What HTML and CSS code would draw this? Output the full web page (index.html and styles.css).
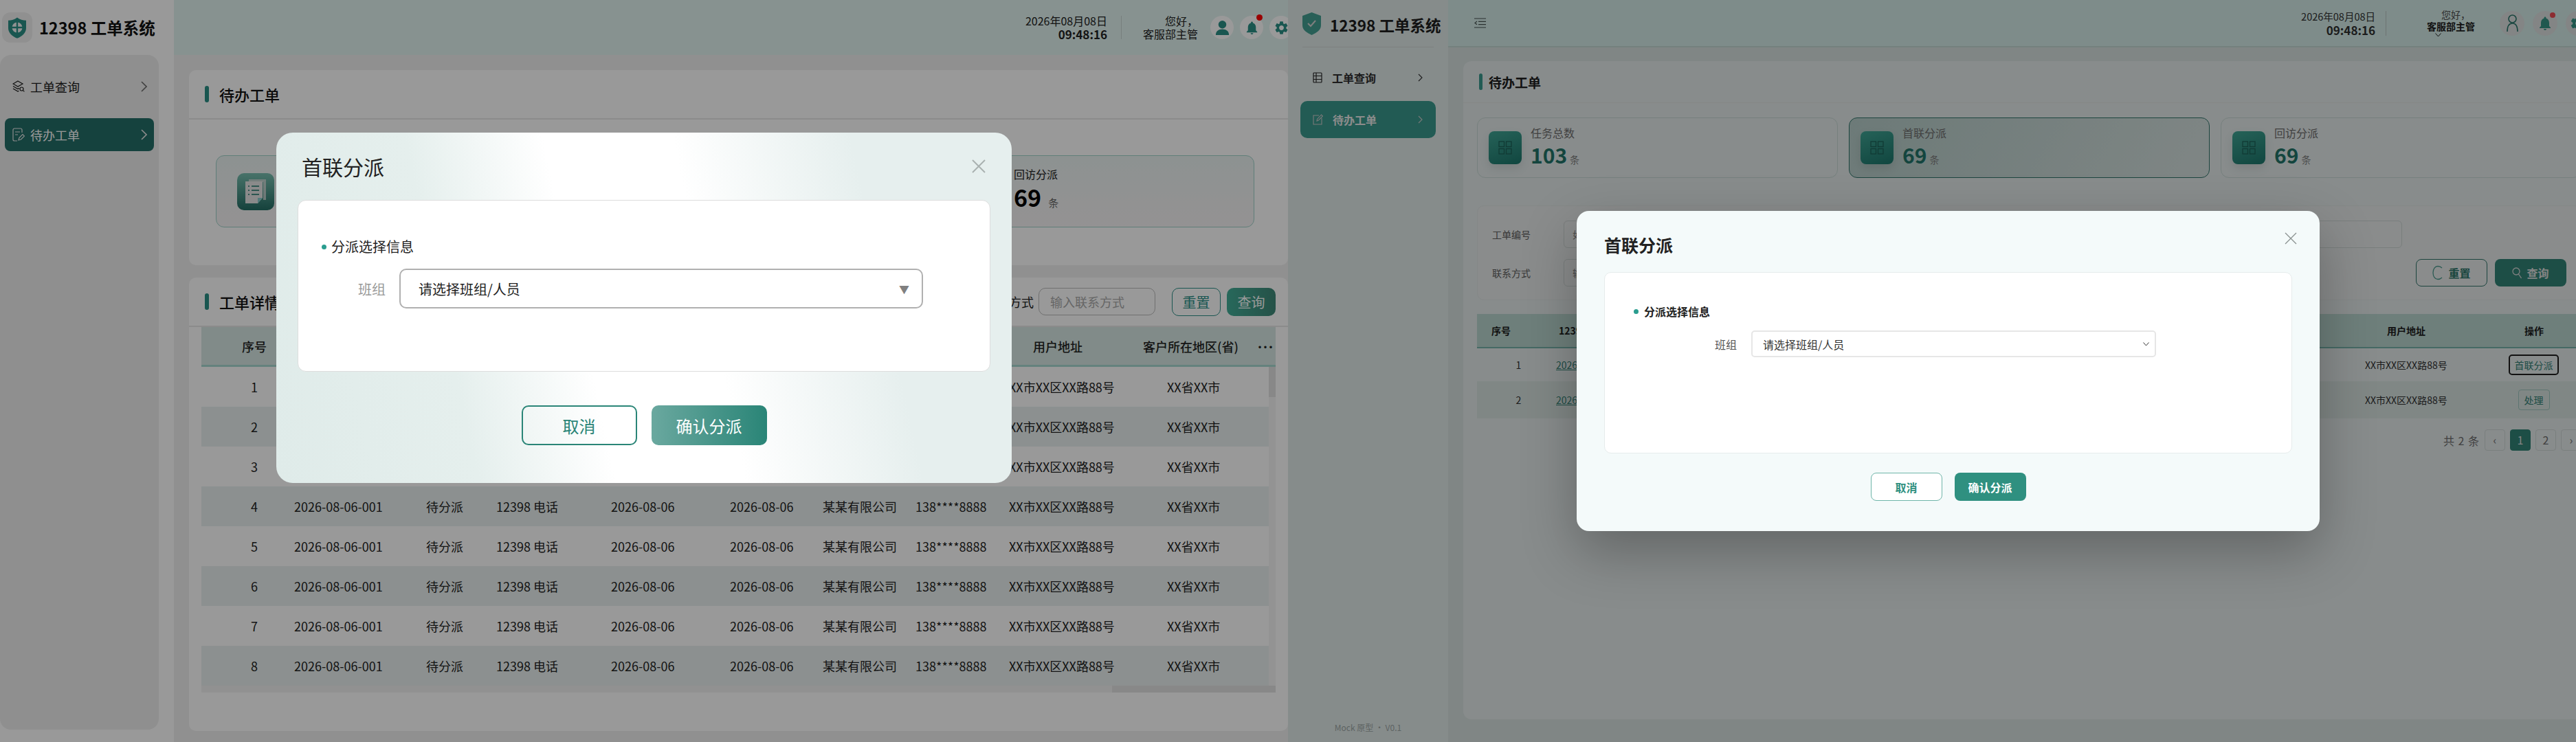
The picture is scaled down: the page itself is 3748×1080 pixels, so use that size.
FILE: index.html
```html
<!DOCTYPE html>
<html lang="zh-CN">
<head>
  <meta charset="UTF-8">
  <meta name="viewport" content="width=device-width, initial-scale=1.0">
  <title>12398 工单系统</title>
  <link rel="stylesheet" href="styles.css">
</head>
<body>
  <!-- First version of the prototype -->
  <section class="app app-one">
    <aside class="side">
      <div class="brand">
        <span class="brand-box">
          <svg width="26" height="31" viewBox="0 0 26 31"><path d="M13 0.5 C17 3.5 21 4.5 26 4.8 V16 C26 23 20 28 13 30.8 C6 28 0 23 0 16 V4.8 C5 4.5 9 3.5 13 0.5Z" fill="#2a8f86"/><circle cx="13" cy="15" r="7.5" fill="#f4f4f4"/><path d="M13 7v16M5 15h16" stroke="#2a8f86" stroke-width="2.4"/></svg>
        </span>
        <span class="brand-name">12398 工单系统</span>
      </div>
      <nav class="nav-panel">
        <a class="nav-item">
          <svg class="nav-icon" width="18" height="18" viewBox="0 0 18 18" fill="none" stroke="#1c1c1c" stroke-width="1.2"><path d="M8 1l7 4-7 4-7-4z"/><path d="M1 8.5l7 4 2-1.1M1 12l7 4 1.5-.8"/><circle cx="13.5" cy="12.5" r="2.5"/><path d="M15.4 14.4l2 2"/></svg>
          <span>工单查询</span>
          <svg class="nav-arrow" width="9" height="16" viewBox="0 0 9 16" fill="none" stroke="#6d6d6d" stroke-width="1.6"><path d="M1 1l7 7-7 7"/></svg>
        </a>
        <a class="nav-item active">
          <svg class="nav-icon" width="18" height="20" viewBox="0 0 18 20" fill="none" stroke="#e8e8e8" stroke-width="1.2"><path d="M14 7V3a2 2 0 0 0-2-2H3a2 2 0 0 0-2 2v14a2 2 0 0 0 2 2h4"/><path d="M4 6h7M4 10h4"/><path d="M9 18l1-3.5 5-5 2.5 2.5-5 5z"/></svg>
          <span>待办工单</span>
          <svg class="nav-arrow" width="9" height="16" viewBox="0 0 9 16" fill="none" stroke="#e8e8e8" stroke-width="1.6"><path d="M1 1l7 7-7 7"/></svg>
        </a>
      </nav>
    </aside>
    <main class="main">
      <header class="topbar">
        <div class="clock">
          <span>2026年08月08日</span>
          <b>09:48:16</b>
        </div>
        <i class="divider"></i>
        <div class="user"><span>您好，</span><span>客服部主管</span></div>
        <div class="tools">
          <span class="tool"><svg width="22" height="24" viewBox="0 0 22 24" fill="#2a8f86"><circle cx="11" cy="7" r="6"/><path d="M1 23c0-6 4-9 10-9s10 3 10 9z"/></svg></span>
          <span class="tool"><svg width="30" height="30" viewBox="0 0 24 24" fill="#2a8f86"><path d="M12 22c1.1 0 2-.9 2-2h-4c0 1.1.9 2 2 2zm6-6v-5c0-3.07-1.63-5.64-4.5-6.32V4c0-.83-.67-1.5-1.5-1.5s-1.5.67-1.5 1.5v.68C7.64 5.36 6 7.92 6 11v5l-2 2v1h16v-1l-2-2z"/></svg><i class="dot"></i></span>
          <span class="tool"><svg width="26" height="26" viewBox="0 0 24 24" fill="#2a8f86"><path d="M19.14 12.94c.04-.3.06-.61.06-.94 0-.32-.02-.64-.07-.94l2.03-1.58c.18-.14.23-.41.12-.61l-1.92-3.32c-.12-.22-.37-.29-.59-.22l-2.39.96c-.5-.38-1.03-.7-1.62-.94l-.36-2.54c-.04-.24-.24-.41-.48-.41h-3.84c-.24 0-.43.17-.47.41l-.36 2.54c-.59.24-1.13.57-1.62.94l-2.39-.96c-.22-.08-.47 0-.59.22L2.74 8.87c-.12.21-.08.47.12.61l2.03 1.58c-.05.3-.09.63-.09.94s.02.64.07.94l-2.03 1.58c-.18.14-.23.41-.12.61l1.92 3.32c.12.22.37.29.59.22l2.39-.96c.5.38 1.03.7 1.62.94l.36 2.54c.05.24.24.41.48.41h3.84c.24 0 .44-.17.47-.41l.36-2.54c.59-.24 1.13-.56 1.62-.94l2.39.96c.22.08.47 0 .59-.22l1.92-3.32c.12-.22.07-.47-.12-.61l-2.01-1.58zM12 15.6c-1.98 0-3.6-1.62-3.6-3.6s1.62-3.6 3.6-3.6 3.6 1.62 3.6 3.6-1.62 3.6-3.6 3.6z"/></svg></span>
        </div>
      </header>
      <div class="content">
        <section class="card card-todo">
          <div class="card-head"><i class="bar"></i><h2>待办工单</h2></div>
          <div class="stats">
            <div class="stat">
              <span class="stat-icon">
                <svg width="30" height="36" viewBox="0 0 30 36"><path d="M5 0h25v30h-4V4H5z" fill="#ddd" opacity=".75"/><path d="M0 3h25v24l-7 8H0z" fill="#e6e6e6"/><path d="M18 35l7-8h-7z" fill="#8cc"/><path d="M4 10h2M4 16h2M4 22h2M9 10h11M9 16h11M9 22h11" stroke="#4a8f86" stroke-width="2"/></svg>
              </span>
              <div><div class="stat-label">任务总数</div><div class="stat-value">103<small>条</small></div></div>
            </div>
            <div class="stat">
              <span class="stat-icon"></span>
              <div><div class="stat-label">首联分派</div><div class="stat-value">69<small>条</small></div></div>
            </div>
            <div class="stat stat-last">
              <div><div class="stat-label">回访分派</div><div class="stat-value">69<small>条</small></div></div>
            </div>
          </div>
        </section>
        <section class="card card-list">
          <div class="card-head">
            <i class="bar"></i><h2>工单详情</h2>
            <div class="filters">
              <label>联系方式</label>
              <span class="input">输入联系方式</span>
              <button class="btn-reset">重置</button>
              <button class="btn-query">查询</button>
            </div>
          </div>
          <div class="grid-table">
            <div class="grid-head">
              <span class="no">序号</span><span>工单编号</span><span>状态</span><span>来源</span><span>创建日期</span><span>受理日期</span><span>客户名称</span><span>联系方式</span><span>用户地址</span><span>客户所在地区(省)</span><span class="more">⋯</span>
            </div>
            <div class="grid-wrap">
              <div class="grid-rows" id="rowsOne"></div>
              <div class="vbar"><i></i></div>
            </div>
            <div class="hbar"><i></i></div>
          </div>
        </section>
      </div>
    </main>
    <div class="overlay">
      <div class="dialog">
        <div class="dialog-head">
          <h3>首联分派</h3>
          <svg width="20" height="20" viewBox="0 0 20 20" stroke="#a9b1b0" stroke-width="2"><path d="M1 1l18 18M19 1L1 19"/></svg>
        </div>
        <div class="dialog-body">
          <div class="section-title"><i></i>分派选择信息</div>
          <div class="form-row">
            <label>班组</label>
            <div class="select">请选择班组/人员<span>▼</span></div>
          </div>
        </div>
        <div class="dialog-foot">
          <button class="btn-cancel">取消</button>
          <button class="btn-ok">确认分派</button>
        </div>
      </div>
    </div>
  </section>

  <!-- Second version -->
  <section class="app app-two">
    <aside class="side">
      <div class="brand">
        <svg class="brand-logo" width="27" height="33" viewBox="0 0 27 33"><path d="M13.5 0 L27 5 V19 C27 26 20 30 13.5 33 C7 30 0 26 0 19 V5Z" fill="#4aae9f"/><path d="M8 16l4 4 7-8" fill="none" stroke="#e8e8e8" stroke-width="2"/></svg>
        <span class="brand-name">12398 工单系统</span>
      </div>
      <nav class="nav-panel">
        <a class="nav-item">
          <svg class="nav-icon" width="14" height="16" viewBox="0 0 14 16" fill="none" stroke="#2a2a2a" stroke-width="1.2"><rect x="1" y="1" width="12" height="14" rx="1"/><path d="M1 5.5h12M1 10.5h12M5 1v14"/></svg>
          <span>工单查询</span>
          <svg class="nav-arrow" width="7" height="12" viewBox="0 0 7 12" fill="none" stroke="#333" stroke-width="1.1"><path d="M1 1l5 5-5 5"/></svg>
        </a>
        <a class="nav-item active">
          <svg class="nav-icon" width="15" height="16" viewBox="0 0 15 16" fill="none" stroke="#ddd" stroke-width="1.1"><path d="M9 2H1v13h12V6"/><path d="M6 10l.5-2.5L12.5 1l2 2-6 6z"/></svg>
          <span>待办工单</span>
          <svg class="nav-arrow" width="7" height="12" viewBox="0 0 7 12" fill="none" stroke="#ddd" stroke-width="1.1"><path d="M1 1l5 5-5 5"/></svg>
        </a>
      </nav>
      <div class="side-foot">Mock 原型 · V0.1</div>
    </aside>
    <main class="main">
      <header class="topbar">
        <svg class="menu-btn" width="17" height="15" viewBox="0 0 17 15" fill="none" stroke="#4d5a58" stroke-width="1.2"><path d="M0 1h17M6 5.3h11M6 9.6h11M0 14h17M4 5l-3 2.4 3 2.4"/></svg>
        <div class="clock">
          <span>2026年08月08日</span>
          <b>09:48:16</b>
        </div>
        <i class="divider"></i>
        <div class="user">
          <span class="hello">您好，</span>
          <b>客服部主管</b>
          <svg width="9" height="6" viewBox="0 0 9 6" fill="none" stroke="#222" stroke-width="1"><path d="M.5.5l4 4.5 4-4.5"/></svg>
        </div>
        <div class="tools">
          <span class="tool"><svg width="17" height="26" viewBox="0 0 17 26" fill="none" stroke="#2d7f73" stroke-width="1.6"><circle cx="8.5" cy="6.5" r="5.5"/><path d="M1 25c0-7 2-12 7.5-12S16 18 16 25"/></svg></span>
          <span class="tool"><svg width="24" height="24" viewBox="0 0 24 24" fill="#3aa090"><path d="M12 22c1.1 0 2-.9 2-2h-4c0 1.1.9 2 2 2zm6-6v-5c0-3.07-1.63-5.64-4.5-6.32V4c0-.83-.67-1.5-1.5-1.5s-1.5.67-1.5 1.5v.68C7.64 5.36 6 7.92 6 11v5l-2 2v1h16v-1l-2-2z"/></svg><i class="dot"></i></span>
          <span class="tool"><svg width="26" height="26" viewBox="0 0 24 24" fill="#3aa090"><path d="M19.14 12.94c.04-.3.06-.61.06-.94 0-.32-.02-.64-.07-.94l2.03-1.58c.18-.14.23-.41.12-.61l-1.92-3.32c-.12-.22-.37-.29-.59-.22l-2.39.96c-.5-.38-1.03-.7-1.62-.94l-.36-2.54c-.04-.24-.24-.41-.48-.41h-3.84c-.24 0-.43.17-.47.41l-.36 2.54c-.59.24-1.13.57-1.62.94l-2.39-.96c-.22-.08-.47 0-.59.22L2.74 8.87c-.12.21-.08.47.12.61l2.03 1.58c-.05.3-.09.63-.09.94s.02.64.07.94l-2.03 1.58c-.18.14-.23.41-.12.61l1.92 3.32c.12.22.37.29.59.22l2.39-.96c.5.38 1.03.7 1.62.94l.36 2.54c.05.24.24.41.48.41h3.84c.24 0 .44-.17.47-.41l.36-2.54c.59-.24 1.13-.56 1.62-.94l2.39.96c.22.08.47 0 .59-.22l1.92-3.32c.12-.22.07-.47-.12-.61l-2.01-1.58zM12 15.6c-1.98 0-3.6-1.62-3.6-3.6s1.62-3.6 3.6-3.6 3.6 1.62 3.6 3.6-1.62 3.6-3.6 3.6z"/></svg></span>
        </div>
      </header>
      <div class="content">
        <section class="card">
          <div class="card-head"><i class="bar"></i><h2>待办工单</h2></div>
          <div class="stats">
            <div class="stat">
              <span class="stat-icon"><svg width="20" height="20" viewBox="0 0 20 20" fill="none" stroke="#1f6b60" stroke-width="1.3"><rect x="1" y="1" width="7.5" height="7.5"/><rect x="11.5" y="1" width="7.5" height="7.5"/><rect x="1" y="11.5" width="7.5" height="7.5"/><rect x="11.5" y="11.5" width="7.5" height="7.5"/></svg></span>
              <div><div class="stat-label">任务总数</div><div class="stat-value">103<small>条</small></div></div>
            </div>
            <div class="stat selected">
              <span class="stat-icon"><svg width="20" height="20" viewBox="0 0 20 20" fill="none" stroke="#1f6b60" stroke-width="1.3"><rect x="1" y="1" width="7.5" height="7.5"/><rect x="11.5" y="1" width="7.5" height="7.5"/><rect x="1" y="11.5" width="7.5" height="7.5"/><rect x="11.5" y="11.5" width="7.5" height="7.5"/></svg></span>
              <div><div class="stat-label">首联分派</div><div class="stat-value">69<small>条</small></div></div>
            </div>
            <div class="stat">
              <span class="stat-icon"><svg width="20" height="20" viewBox="0 0 20 20" fill="none" stroke="#1f6b60" stroke-width="1.3"><rect x="1" y="1" width="7.5" height="7.5"/><rect x="11.5" y="1" width="7.5" height="7.5"/><rect x="1" y="11.5" width="7.5" height="7.5"/><rect x="11.5" y="11.5" width="7.5" height="7.5"/></svg></span>
              <div><div class="stat-label">回访分派</div><div class="stat-value">69<small>条</small></div></div>
            </div>
          </div>
          <div class="filter-panel">
            <div class="filter-row">
              <label>工单编号</label><span class="input">如 2026-08-06-001</span>
              <label class="second">客户名称</label><span class="input">输入客户名称</span>
            </div>
            <div class="filter-row">
              <label>联系方式</label><span class="input short">输入联系方式</span>
              <button class="btn-reset"><svg width="16" height="22" viewBox="0 0 16 22" fill="none" stroke="#4ea597" stroke-width="1.3"><path d="M14 4C12 2 10 1.5 8 1.5 4 1.5 1 5.5 1 11s3 9.5 7 9.5c2 0 4-.5 6-2.5"/></svg>重置</button>
              <button class="btn-query"><svg width="14" height="18" viewBox="0 0 14 18" fill="none" stroke="#e8e8e8" stroke-width="1.3"><circle cx="6" cy="7" r="5"/><path d="M9.5 11l4 6"/></svg>查询</button>
            </div>
          </div>
          <div class="list">
            <div class="list-head"><span>序号</span><span>12398 工单编号</span><span>用户地址</span><span>操作</span></div>
            <div class="list-row"><span class="no">1</span><a>2026-08-06-001</a><span>XX市XX区XX路88号</span><button class="op focus">首联分派</button></div>
            <div class="list-row even"><span class="no">2</span><a>2026-08-06-002</a><span>XX市XX区XX路88号</span><button class="op">处理</button></div>
          </div>
          <div class="pager">
            <span class="total">共 2 条</span>
            <span class="page">‹</span><span class="page on">1</span><span class="page">2</span><span class="page">›</span>
          </div>
        </section>
      </div>
    </main>
    <div class="overlay">
      <div class="dialog">
        <div class="dialog-head">
          <h3>首联分派</h3>
          <svg class="dialog-close" width="18" height="18" viewBox="0 0 18 18" stroke="#8a9190" stroke-width="1.3"><path d="M1 1l16 16M17 1L1 17"/></svg>
        </div>
        <div class="dialog-body">
          <div class="section-title"><i></i>分派选择信息</div>
          <div class="form-row">
            <label>班组</label>
            <div class="select">请选择班组/人员<svg width="9" height="6" viewBox="0 0 9 6" fill="none" stroke="#333" stroke-width="1"><path d="M.5.5l4 4.5 4-4.5"/></svg></div>
          </div>
        </div>
        <div class="dialog-foot">
          <button class="btn-cancel">取消</button>
          <button class="btn-ok">确认分派</button>
        </div>
      </div>
    </div>
  </section>

  <script>
    // Table rows of the first version are all the same mock record
    const rowsOne = document.getElementById('rowsOne');
    for (let i = 1; i <= 8; i++) {
      const row = document.createElement('div');
      row.className = 'grid-row';
      const cells = [i, '2026-08-06-001', '待分派', '12398 电话', '2026-08-06', '2026-08-06', '某某有限公司', '138****8888', 'XX市XX区XX路88号', 'XX省XX市'];
      cells.forEach(function(text, n) {
        const cell = document.createElement('span');
        cell.textContent = text;
        if (n === 0) cell.className = 'no';
        row.appendChild(cell);
      });
      rowsOne.appendChild(row);
    }
  </script>
</body>
</html>
```

FILE: styles.css
```css
* {
  box-sizing: border-box;
}

body {
  margin: 0;
  width: 3748px;
  height: 1080px;
  overflow: hidden;
  display: flex;
  font-family: "Noto Sans CJK SC", "Noto Sans", sans-serif;
  color: #222;
}

h2, h3 {
  margin: 0;
  font-weight: 500;
}

button {
  font-family: inherit;
  cursor: pointer;
}

.app {
  position: relative;
  flex: none;
  height: 1080px;
  display: flex;
  overflow: hidden;
}

.side {
  flex: none;
  display: flex;
  flex-direction: column;
}

.main {
  flex: 1;
  min-width: 0;
  display: flex;
  flex-direction: column;
  overflow: hidden;
}

.brand {
  display: flex;
  align-items: center;
}

.topbar {
  display: flex;
  align-items: center;
  flex: none;
}

.clock {
  display: flex;
  flex-direction: column;
  align-items: flex-end;
}

.divider {
  width: 1px;
  background: #c8d4d2;
}

.user {
  display: flex;
  flex-direction: column;
  align-items: flex-end;
}

.tools {
  display: flex;
}

.tool {
  position: relative;
  display: flex;
  align-items: center;
  justify-content: center;
  flex: none;
  border-radius: 50%;
}

.dot {
  position: absolute;
  border-radius: 50%;
}

.card {
  background: #fff;
}

.card-head {
  display: flex;
  align-items: center;
}

.bar {
  width: 6px;
  height: 24px;
  border-radius: 3px;
}

.stat {
  display: flex;
  align-items: center;
}

.stat-icon {
  display: flex;
  align-items: center;
  justify-content: center;
  flex: none;
}

.overlay {
  position: absolute;
  inset: 0;
  display: flex;
  justify-content: center;
}

.dialog-head {
  display: flex;
  align-items: center;
  justify-content: space-between;
}

.section-title {
  display: flex;
  align-items: center;
}

.section-title i {
  border-radius: 50%;
  background: #2a9d8f;
}

.form-row {
  display: flex;
  align-items: center;
}

.select {
  display: flex;
  align-items: center;
  justify-content: space-between;
  background: #fff;
}

.dialog-foot {
  display: flex;
  justify-content: center;
}

/* ---------- first version ---------- */
.app-one {
  width: 1874px;
  background: #f0f0f0;
}

.app-one .side {
  width: 253px;
  background: #fff;
  padding-top: 18px;
}

.app-one .brand {
  height: 44px;
  margin-left: 3px;
  gap: 10px;
}

.brand-box {
  width: 44px;
  height: 44px;
  border-radius: 12px;
  background: #f0f0f0;
  display: flex;
  align-items: center;
  justify-content: center;
}

.app-one .brand-name {
  font-size: 23.5px;
  font-weight: 700;
  color: #111;
  white-space: nowrap;
}

.app-one .nav-panel {
  margin-top: 18px;
  width: 231px;
  height: 982px;
  background: #eee;
  border-radius: 16px;
  padding: 22px 7px;
  display: flex;
  flex-direction: column;
  gap: 22px;
}

.app-one .nav-item {
  height: 48px;
  display: flex;
  align-items: center;
  padding: 0 10px 0 11px;
  border-radius: 8px;
  font-size: 18px;
  color: #1c1c1c;
}

.app-one .nav-item .nav-icon {
  margin-right: 8px;
}

.nav-arrow {
  margin-left: auto;
}

.app-one .nav-item.active {
  background: #246e68;
  color: #fff;
}

.app-one .topbar {
  height: 80px;
  background: #e1f3f0;
  justify-content: flex-end;
  margin-right: -7px;
}

.app-one .clock {
  font-size: 16px;
  line-height: 19px;
  margin-right: 20px;
}

.app-one .clock b {
  font-size: 17px;
  font-weight: 700;
}

.app-one .divider {
  height: 34px;
  margin-right: 31px;
}

.app-one .user {
  font-size: 16px;
  line-height: 19px;
  margin-right: 18px;
}

.app-one .tools {
  gap: 9px;
}

.app-one .tool {
  width: 34px;
  height: 34px;
  background: #fff;
}

.app-one .tool svg {
  width: 23px;
  height: 23px;
}

.app-one .dot {
  width: 9px;
  height: 9px;
  right: 1px;
  top: -2px;
  background: #ff0000;
}

.app-one .content {
  flex: 1;
  padding: 22px 0 16px 22px;
  display: flex;
  flex-direction: column;
  gap: 18px;
}

.app-one .card {
  border-radius: 10px;
}

.app-one .card-head {
  padding-left: 23px;
  height: 72px;
  border-bottom: 2px solid #e8e8e8;
  gap: 15px;
}

.app-one .bar {
  background: #2a8f86;
}

.app-one h2 {
  font-size: 22px;
  color: #111;
}

.card-todo {
  height: 284px;
}

.app-one .stats {
  margin-top: 52px;
  padding: 0 49px 0 39px;
  display: grid;
  grid-template-columns: 1fr 1fr 451px;
  gap: 24px;
}

.app-one .stat {
  height: 105px;
  padding-left: 30px;
  gap: 16px;
  border: 1.5px solid #9fd3ca;
  border-radius: 12px;
  background: linear-gradient(#ebf4f2, #f7f3f5);
}

.app-one .stat-last {
  padding-left: 100px;
}

.app-one .stat-icon {
  width: 54px;
  height: 54px;
  border-radius: 10px;
  background: linear-gradient(#78bfb0, #246e65);
}

.app-one .stat-label {
  font-size: 16px;
  line-height: 24px;
}

.app-one .stat-value {
  font-size: 34px;
  font-weight: 700;
  line-height: 44px;
  color: #000;
}

.app-one .stat-value small {
  font-size: 15px;
  font-weight: 400;
  color: #666;
  margin-left: 10px;
}

.card-list {
  flex: 1;
}

.filters {
  margin-left: auto;
  margin-right: 18px;
  display: flex;
  align-items: center;
  font-size: 18px;
}

.filters label {
  margin-right: 7px;
}

.filters .input {
  width: 170px;
  height: 40px;
  margin-right: 24px;
  padding-left: 16px;
  line-height: 38px;
  border: 1px solid #bbb;
  border-radius: 10px;
  color: #aaa;
}

.filters button {
  width: 71px;
  height: 41px;
  border-radius: 10px;
  font-size: 20px;
}

.filters .btn-reset {
  background: #fff;
  border: 1px solid #2c8f87;
  color: #2c8f87;
  margin-right: 9px;
}

.filters .btn-query {
  border: 0;
  color: #fff;
  background: linear-gradient(90deg, #42ae98, #3f8878);
}

.grid-table {
  margin-left: 18px;
  width: 1563px;
  font-size: 18px;
}

.grid-head {
  height: 58px;
  display: grid;
  grid-template-columns: 135px 192px 102px 167px 173px 135px 135px 171px 160px 166px 1fr;
  align-items: center;
  background: #d7e8e4;
  border-bottom: 3px solid #a7d9d0;
  font-weight: 500;
  white-space: nowrap;
}

.grid-head .no,
.grid-row .no {
  padding-left: 19px;
  text-align: center;
}

.grid-head .more {
  font-size: 24px;
  line-height: 24px;
}

.grid-wrap {
  display: flex;
  align-items: stretch;
}

.grid-rows {
  flex: 1;
}

.grid-row {
  height: 58px;
  display: grid;
  grid-template-columns: 135px 192px 102px 167px 173px 135px 135px 136px 230px 1fr;
  align-items: center;
  white-space: nowrap;
  color: #222;
}

.grid-row:nth-child(even) {
  background: #e9f1f0;
}

.vbar {
  width: 10px;
  background: #f6f6f6;
}

.vbar i {
  display: block;
  height: 44px;
  background: #e3e3e3;
}

.hbar {
  height: 10px;
  background: #f2f2f2;
  display: flex;
  justify-content: flex-end;
}

.hbar i {
  width: 238px;
  background: #e3e3e3;
}

.app-one .overlay {
  background: rgba(0, 0, 0, 0.4);
  padding-top: 193px;
}

.app-one .dialog {
  width: 1070px;
  height: 510px;
  border-radius: 24px;
  background: linear-gradient(78deg, #dfebe9 0%, #e5efed 25%, #fff 42%, #fff 58%, #e6efee 80%, #e6efee 100%);
  padding: 0 31px;
}

.app-one .dialog-head {
  height: 98px;
  padding: 0 7px 0 6px;
}

.app-one .dialog-head h3 {
  font-size: 30px;
  font-weight: 400;
}

.app-one .dialog-body {
  height: 250px;
  background: #fff;
  border: 1px solid #ddd;
  border-radius: 12px;
  padding-top: 50px;
}

.app-one .section-title {
  font-size: 20px;
  margin-left: 34px;
  line-height: 34px;
  font-weight: 400;
}

.app-one .section-title i {
  width: 7px;
  height: 7px;
  margin-right: 7px;
}

.app-one .form-row {
  margin-top: 15px;
  margin-left: 87px;
}

.app-one .form-row label {
  font-size: 20px;
  color: #999;
  width: 60px;
}

.app-one .select {
  width: 762px;
  height: 58px;
  border: 2px solid #b0b0b0;
  border-radius: 10px;
  padding: 0 18px 0 26px;
  font-size: 20px;
}

.app-one .select span {
  color: #808080;
  font-size: 15px;
}

.app-one .dialog-foot {
  margin-top: 49px;
  gap: 21px;
}

.app-one .dialog-foot button {
  width: 168px;
  height: 58px;
  border-radius: 10px;
  font-size: 24px;
}

.app-one .btn-cancel {
  background: transparent;
  border: 2px solid #2a8577;
  color: #2a8577;
}

.app-one .btn-ok {
  border: 0;
  color: #fff;
  background: linear-gradient(90deg, #6aa89f, #2a8577);
}

/* ---------- second version ---------- */
.app-two {
  width: 1921px;
  background: #e9f4f2;
}

.app-two .side {
  width: 233px;
  background: #f5fffe;
  padding: 18px 0 13px;
}

.app-two .brand {
  height: 51px;
  margin: 0 21px;
  align-items: flex-start;
  gap: 13px;
  border-bottom: 1px solid #e3ecea;
}

.brand-logo {
  flex: none;
}

.app-two .brand-name {
  font-size: 22.5px;
  line-height: 36px;
  font-weight: 700;
  color: #222;
  white-space: nowrap;
}

.app-two .nav-panel {
  margin: 17px 18px 0;
  display: flex;
  flex-direction: column;
  gap: 7px;
}

.app-two .nav-item {
  height: 54px;
  display: flex;
  align-items: center;
  padding: 0 19px 0 18px;
  border-radius: 10px;
  font-size: 16px;
  font-weight: 700;
  color: #333;
}

.app-two .nav-item .nav-icon {
  margin-right: 14px;
}

.app-two .nav-item.active {
  background: #3fa699;
  color: #fff;
}

.side-foot {
  margin-top: auto;
  text-align: center;
  font-size: 12px;
  color: #aab5b3;
}

.app-two .topbar {
  height: 69px;
  background: #e5fffb;
  border-bottom: 2px solid #d4ebe6;
  padding-left: 38px;
}

.menu-btn {
  margin-right: auto;
}

.app-two .clock {
  font-size: 14.5px;
  line-height: 20px;
  margin-right: 15px;
  color: #333;
}

.app-two .clock b {
  font-size: 17px;
}

.app-two .divider {
  height: 36px;
  margin-right: 58px;
}

.app-two .user {
  width: 71px;
  margin-right: 36px;
  font-size: 14px;
  line-height: 17px;
  margin-top: 0;
}

.app-two .user b {
  white-space: nowrap;
  font-weight: 700;
}

.hello {
  margin-right: 7px;
  color: #555;
}

.app-two .user svg {
  align-self: flex-start;
  margin: 1px 0 0 13px;
}

.app-two .tools {
  gap: 12px;
  margin-right: 26px;
}

.app-two .tool {
  width: 36px;
  height: 36px;
  background: #eef3f2;
}

.app-two .dot {
  width: 8px;
  height: 8px;
  top: 2px;
  right: 3px;
  background: #ff505a;
}

.app-two .content {
  flex: 1;
  padding: 20px 22px 33px;
  display: flex;
}

.app-two .card {
  flex: 1;
  background: #f7ffff;
  border-radius: 12px;
  padding: 0 20px;
}

.app-two .card-head {
  height: 61px;
  margin: 0 -20px;
  padding-left: 23px;
  gap: 9px;
  border-bottom: 1px solid #f0f6f5;
}

.app-two .bar {
  width: 5px;
  background: #3fa699;
}

.app-two h2 {
  font-size: 19px;
  font-weight: 700;
}

.app-two .stats {
  margin-top: 21px;
  display: grid;
  grid-template-columns: repeat(3, 525px);
  gap: 16px;
}

.app-two .stat {
  height: 88px;
  padding-left: 16px;
  gap: 13px;
  border: 1px solid #d7e9e5;
  border-radius: 12px;
}

.app-two .stat.selected {
  border-color: #357f74;
  background: linear-gradient(120deg, #c6dfdb, #e8f4f2);
}

.app-two .stat-icon {
  width: 48px;
  height: 48px;
  border-radius: 8px;
  background: linear-gradient(160deg, #45b3a1, #1f8074);
  box-shadow: 0 6px 14px rgba(0, 0, 0, 0.1);
}

.app-two .stat-label {
  font-size: 16px;
  line-height: 26px;
  color: #777;
}

.app-two .stat-value {
  font-size: 30px;
  line-height: 38px;
  font-weight: 700;
  color: #257f72;
}

.app-two .stat-value small {
  font-size: 14px;
  font-weight: 400;
  color: #888;
  margin-left: 4px;
}

.filter-panel {
  margin-top: 40px;
  height: 138px;
  padding: 21px;
  border-radius: 10px;
  background: #fcffff;
  display: flex;
  flex-direction: column;
  gap: 16px;
  border: 1px solid #f1f7f6;
}

.filter-row {
  display: flex;
  align-items: center;
  height: 40px;
  font-size: 14px;
  color: #666;
}

.filter-row label {
  width: 104px;
  flex: none;
}

.filter-row .second {
  width: 100px;
  margin-left: 20px;
}

.filter-row .input {
  width: 550px;
  height: 40px;
  line-height: 38px;
  border: 1px solid #dde6e4;
  border-radius: 6px;
  padding-left: 12px;
  color: #888;
  flex: none;
}

.filter-row .input.short {
  width: 900px;
}

.filter-row button {
  width: 104px;
  height: 40px;
  border-radius: 8px;
  font-size: 16px;
  font-weight: 700;
  display: flex;
  align-items: center;
  justify-content: center;
  gap: 7px;
}

.filter-row .btn-reset {
  margin-left: auto;
  margin-right: 11px;
  background: transparent;
  border: 1px solid #357f74;
  color: #2f7f72;
}

.filter-row .btn-query {
  border: 0;
  background: #358f80;
  color: #f0f0f0;
}

.list {
  margin-top: 20px;
  font-size: 14px;
}

.list-head {
  height: 50px;
  display: grid;
  grid-template-columns: 98px 1205px 200px 1fr;
  align-items: center;
  padding-left: 21px;
  background: #c8e7e1;
  border-bottom: 2px solid #7fbfb6;
  font-weight: 700;
}

.list-row {
  height: 48px;
  display: grid;
  grid-template-columns: 115px 1177px 209px 73px;
  align-items: center;
  color: #333;
  white-space: nowrap;
}

.list-row .no {
  padding-left: 6px;
  text-align: center;
}

.list-row a {
  color: #358a7d;
  text-decoration: underline;
}

.list-row.even {
  height: 54px;
  background: #e9f6f3;
}

.op {
  justify-self: center;
  height: 30px;
  padding: 0 8px;
  font-family: inherit;
  font-size: 14px;
  border: 1px solid #a9d6ce;
  border-radius: 4px;
  background: transparent;
  color: #358a7d;
}

.op.focus {
  width: 73px;
  padding: 0;
  border: 2px solid #222;
  border-radius: 5px;
}

.pager {
  margin-top: 16px;
  display: flex;
  align-items: center;
  justify-content: flex-end;
  gap: 7px;
  font-size: 16px;
  color: #777;
}

.total {
  letter-spacing: 1px;
}

.page {
  width: 30px;
  height: 31px;
  line-height: 29px;
  text-align: center;
  border: 1px solid #dfe8e6;
  border-radius: 4px;
}

.page.on {
  background: #358f80;
  border-color: #358f80;
  color: #eee;
}

.app-two .overlay {
  background: rgba(0, 0, 0, 0.45);
  align-items: center;
}

.app-two .dialog {
  width: 1081px;
  height: 466px;
  background: #f4fafa;
  border-radius: 18px;
  padding: 0 40px;
  box-shadow: 0 30px 80px rgba(0, 0, 0, 0.28);
}

.app-two .dialog-head {
  height: 89px;
  padding: 8px 1px 0 0;
}

.dialog-close {
  margin: -18px -8px 0 0;
}

.app-two .dialog-head h3 {
  font-size: 25px;
  font-weight: 700;
}

.app-two .dialog-body {
  height: 264px;
  background: #fff;
  border: 1px solid #e6ecec;
  border-radius: 10px;
  padding-top: 44px;
}

.app-two .section-title {
  margin-left: 42px;
  font-size: 16px;
  line-height: 24px;
  font-weight: 700;
}

.app-two .section-title i {
  width: 7px;
  height: 7px;
  margin-right: 8px;
}

.app-two .form-row {
  margin-top: 16px;
  margin-left: 160px;
  font-size: 16px;
}

.app-two .form-row label {
  width: 53px;
  color: #555;
}

.app-two .select {
  width: 589px;
  height: 39px;
  padding: 0 8px 0 15px;
  border: 2px solid #e6e6e6;
  border-radius: 5px;
  color: #333;
}

.app-two .dialog-foot {
  margin-top: 28px;
  gap: 18px;
}

.app-two .dialog-foot button {
  width: 104px;
  height: 41px;
  border-radius: 8px;
  font-size: 16px;
  font-weight: 700;
}

.app-two .btn-cancel {
  background: #fff;
  border: 1px solid #6fb5a9;
  color: #2f9080;
}

.app-two .btn-ok {
  border: 0;
  background: #2f9080;
  color: #fff;
}
```
